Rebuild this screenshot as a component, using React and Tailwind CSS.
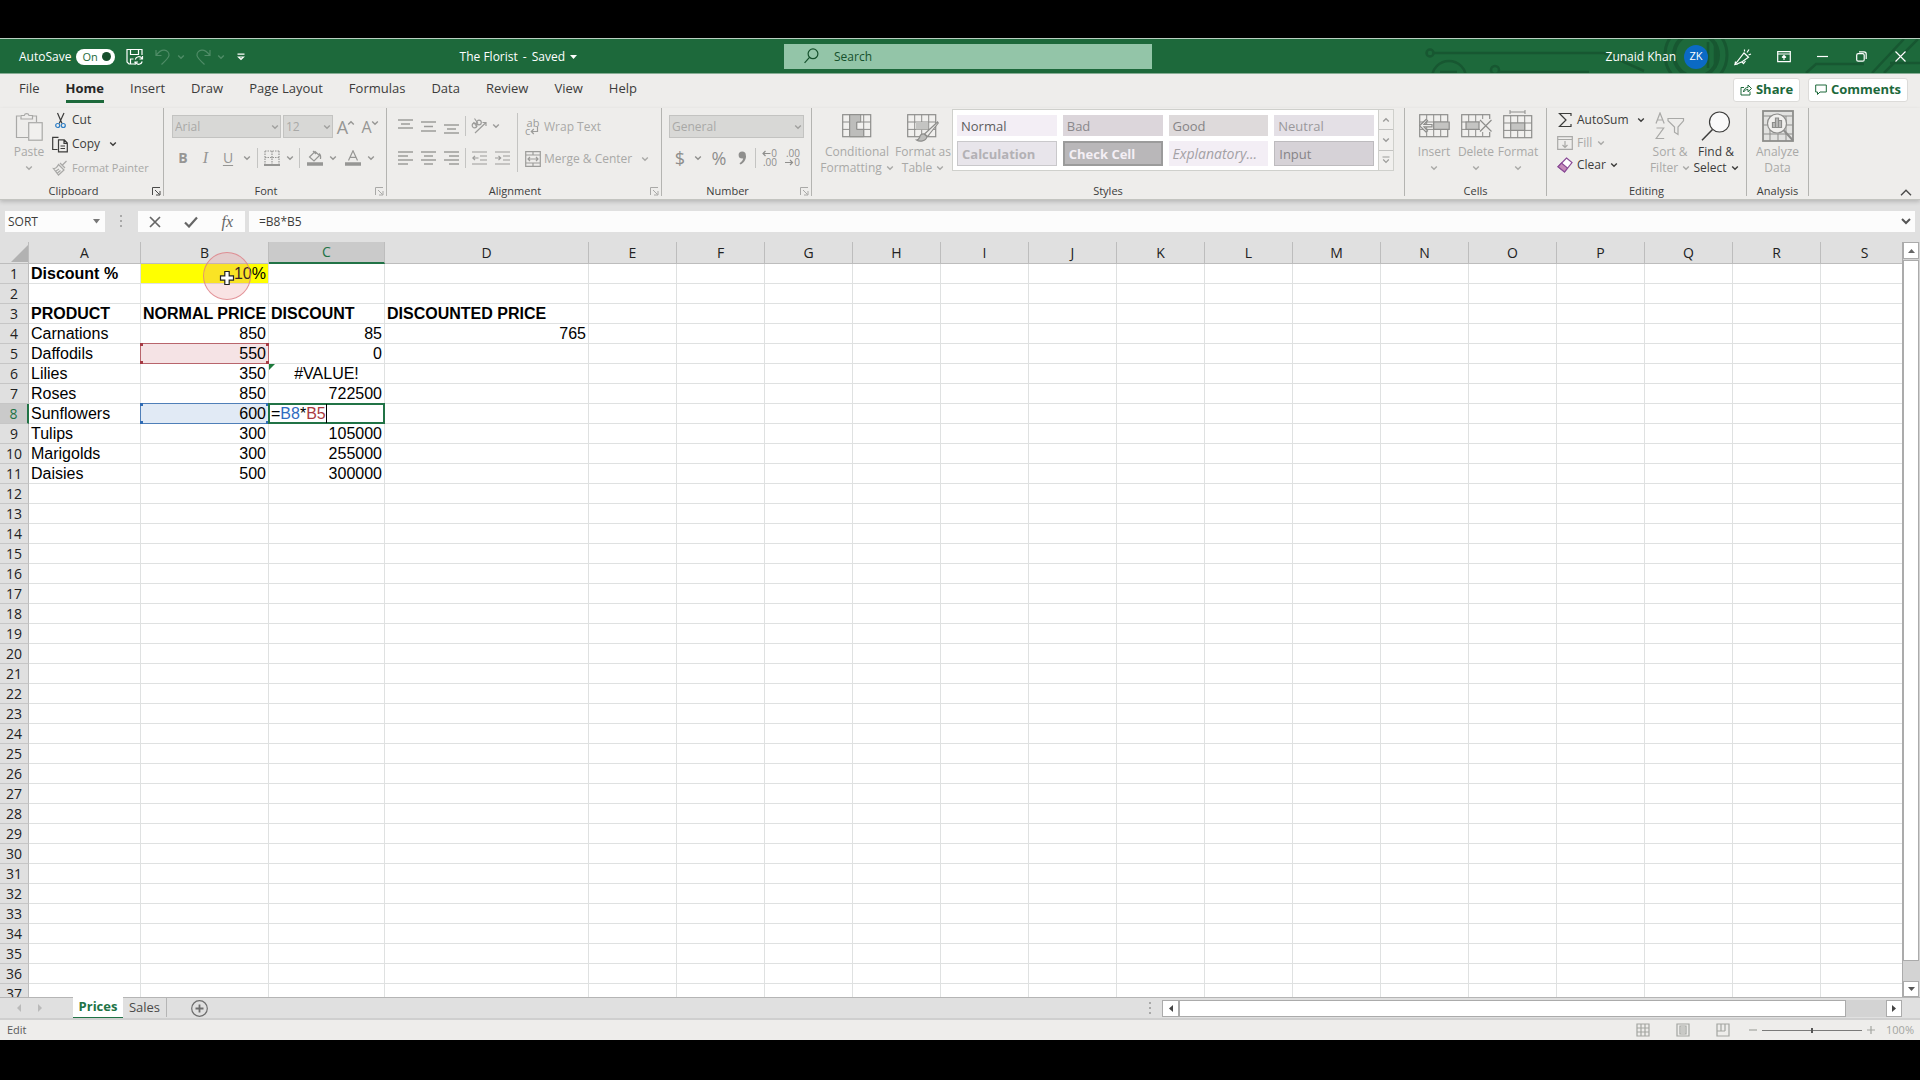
import React from "react";
import clsx from "clsx";

const ribbonTabs = ["File", "Home", "Insert", "Draw", "Page Layout", "Formulas", "Data", "Review", "View", "Help"];

const columns = [
  { id: "A", width: "w-[112px]" },
  { id: "B", width: "w-[128px]" },
  { id: "C", width: "w-[116px]" },
  { id: "D", width: "w-[204px]" },
  ..."EFGHIJKLMNOPQRS".split("").map((id) => ({ id, width: "w-[88px]" })),
];

const cells = {
  A1: { value: "Discount %", bold: true },
  B1: { value: "10%", align: "right", fill: "bg-[#ffff00]" },
  A3: { value: "PRODUCT", bold: true },
  B3: { value: "NORMAL PRICE", bold: true },
  C3: { value: "DISCOUNT", bold: true },
  D3: { value: "DISCOUNTED PRICE", bold: true },
  A4: { value: "Carnations" },
  B4: { value: "850", align: "right" },
  C4: { value: "85", align: "right" },
  D4: { value: "765", align: "right" },
  A5: { value: "Daffodils" },
  B5: { value: "550", align: "right", fill: "bg-[#f5e3e5]", range: "red" },
  C5: { value: "0", align: "right" },
  A6: { value: "Lilies" },
  B6: { value: "350", align: "right" },
  C6: { value: "#VALUE!", align: "center", error: true },
  A7: { value: "Roses" },
  B7: { value: "850", align: "right" },
  C7: { value: "722500", align: "right" },
  A8: { value: "Sunflowers" },
  B8: { value: "600", align: "right", fill: "bg-[#e1eaf5]", range: "blue" },
  C8: { editing: true },
  A9: { value: "Tulips" },
  B9: { value: "300", align: "right" },
  C9: { value: "105000", align: "right" },
  A10: { value: "Marigolds" },
  B10: { value: "300", align: "right" },
  C10: { value: "255000", align: "right" },
  A11: { value: "Daisies" },
  B11: { value: "500", align: "right" },
  C11: { value: "300000", align: "right" },
};

const cellStyles = [
  { name: "Normal", className: "bg-[#f3eef5] text-[13px] text-[#5e5d5f]" },
  { name: "Bad", className: "bg-[#dcd6db] text-[13px] text-[#8a888b]" },
  { name: "Good", className: "bg-[#dedadb] text-[13px] text-[#868486]" },
  { name: "Neutral", className: "bg-[#e4e0e6] text-[13px] text-[#9a989b]" },
  { name: "Calculation", className: "border border-[#c9c8cb] bg-[#e8e5eb] text-[13px] font-bold text-[#b3b1b5]" },
  { name: "Check Cell", className: "border-2 border-[#9b9b9b] bg-[#b9b7b9] text-[13px] font-bold text-[#f4eff5]" },
  { name: "Explanatory...", className: "bg-[#f3eef5] text-sm italic text-[#a3a1a5]" },
  { name: "Input", className: "border border-[#bdbbbe] bg-[#d6d2d7] text-[13px] text-[#868487]" },
];

function Icon({ w = 16, h = 16, className, children, ...props }) {
  return (
    <svg
      width={w}
      height={h}
      viewBox={`0 0 ${w} ${h}`}
      fill="none"
      stroke="currentColor"
      strokeWidth="1.2"
      aria-hidden="true"
      className={clsx("shrink-0", className)}
      {...props}
    >
      {children}
    </svg>
  );
}

function Chevron({ up, className }) {
  return (
    <Icon w={8} h={6} className={className} strokeWidth="1.4">
      <path d={up ? "M1.2 4.5 4 1.7 6.8 4.5" : "M1.2 1.5 4 4.3 6.8 1.5"} />
    </Icon>
  );
}

function Lines({ rows, w = 15, h = 16 }) {
  return (
    <Icon w={w} h={h} strokeWidth="1.5">
      {rows.map(([x1, x2, y]) => (
        <path key={y} d={`M${x1} ${y}H${x2}`} />
      ))}
    </Icon>
  );
}

function SheetGrid({ children }) {
  return (
    <>
      <rect x="0.7" y="0.7" width="28" height="22" fill="#f1f0ee" />
      <path d="M0.7 8h28M0.7 15.4h28M7.7 0.7v22M14.7 0.7v22M21.7 0.7v22" strokeWidth="1" />
      {children}
    </>
  );
}

function IconButton({ label, width, className, children }) {
  return (
    <button type="button" aria-label={label} className={clsx("flex h-5 shrink-0 items-center justify-center", width, className)}>
      {children}
    </button>
  );
}

function Divider({ className }) {
  return <span className={clsx("w-px shrink-0 bg-[#c4c4c2]", className)} />;
}

function TallButton({ icon, lines, width, chevron, className }) {
  return (
    <button type="button" className={clsx("flex shrink-0 flex-col items-center text-xs leading-4", width, className)}>
      <span className="flex h-9 items-center justify-center">{icon}</span>
      <span>{lines[0]}</span>
      <span className="flex h-4 items-center gap-1 whitespace-nowrap">
        {lines[1]}
        {chevron && <Chevron />}
      </span>
    </button>
  );
}

function Launcher({ className }) {
  return (
    <button type="button" aria-label="More options" className={className}>
      <Icon w={9} h={9} strokeWidth="1">
        <path d="M0.5 8V0.5H8M3 3l4.5 4.5M8 4v4H4" />
      </Icon>
    </button>
  );
}

function Group({ label, width, launcher, launcherColor = "text-[#a9a9a7]", className, children }) {
  return (
    <section aria-label={label} className={clsx("flex h-[88px] shrink-0 flex-col border-r border-[#b4b4b1]", width)}>
      <div className={clsx("flex h-[76px] shrink-0", className)}>{children}</div>
      <div className="flex h-[14px] shrink-0 items-center text-[11px] leading-[14px] text-[#3c3c3b]">
        <span className="flex-1 text-center">{label}</span>
        {launcher && (
          <span className="flex w-[18px] justify-end pr-[2px]">
            <Launcher className={launcherColor} />
          </span>
        )}
      </div>
    </section>
  );
}

function Dropdown({ label, value, width }) {
  return (
    <span className={clsx("relative flex h-[23px] shrink-0 items-center", width)}>
      <select
        aria-label={label}
        disabled
        className="h-full w-full appearance-none border border-[#c3c3c1] bg-[#d8d8d6] px-[2px] text-xs text-[#a9a9a7] opacity-100"
      >
        <option>{value}</option>
      </select>
      <Chevron className="pointer-events-none absolute right-[2px] text-[#a0a09e]" />
    </span>
  );
}

function TitleBar() {
  return (
    <header className="relative flex h-9 shrink-0 items-center overflow-hidden border-t border-b border-t-[#b9cfc1] border-b-[#86ad94] bg-[#1d693b] pl-4 text-xs text-white">
      {/* circuit board artwork */}
      <Icon w={496} h={34} className="absolute top-0 right-0 text-[#175731]" strokeWidth="2.5">
        <circle cx="6" cy="14" r="3.5" />
        <path d="M10 14h170l40 18" />
        <circle cx="25" cy="39" r="17" />
        <path d="M16 33h17" />
        <circle cx="71" cy="31" r="4" />
        <path d="M75 33h90" />
        <circle cx="272" cy="16" r="31" strokeWidth="3" />
        <circle cx="272" cy="16" r="22" strokeWidth="4" />
        <path d="M284 3v26M291 3v26M382 34l10-9h48M448 34l32-34M460 34l34-34M466 24h30" />
      </Icon>
      <div className="flex flex-1 items-center pt-px">
        <label className="ml-[3px] flex items-center gap-[5px]">
          AutoSave
          <input type="checkbox" role="switch" defaultChecked className="sr-only" />
          <span className="flex h-4 w-[39px] items-center justify-between rounded-full bg-white pr-1 pl-[6px] text-[11px] leading-4 text-[#1d693b]">
            On
            <span className="h-[9px] w-[9px] rounded-full bg-[#174f2d]" />
          </span>
        </label>
        <button type="button" aria-label="Save" className="ml-[11px]">
          <Icon w={18} h={18}>
            <path d="M8 16H3L1 14V1.5h15V7M4.5 1.5v5h8v-5M4.5 16v-5h3" />
            <path d="M9.3 11.5a3.6 3.6 0 0 1 6.6-1M16.5 8v3h-3M16.2 13.5a3.6 3.6 0 0 1-6.6 1M9 17v-3h3" />
          </Icon>
        </button>
        <button type="button" aria-label="Undo" className="ml-[11px] flex items-center gap-[6px] text-[#4f8c67]">
          <Icon w={16} h={18}>
            <path d="M1 2v5.5h5.5M1.3 7.2C4 3.5 6.5 2 9.2 2.2c3 .3 5 2.6 4.8 5.3-.2 2-1.5 3.5-7.5 9" />
          </Icon>
          <Chevron />
        </button>
        <button type="button" aria-label="Redo" className="ml-[10px] flex items-center gap-[6px] text-[#4f8c67]">
          <Icon w={16} h={18}>
            <path d="M15 2v5.5H9.5M14.7 7.2C12 3.5 9.5 2 6.8 2.2c-3 .3-5 2.6-4.8 5.3.2 2 1.5 3.5 7.5 9" />
          </Icon>
          <Chevron />
        </button>
        <button type="button" aria-label="Customize toolbar" className="ml-3">
          <Icon w={8} h={8}>
            <path d="M0.5 1.2h7M1.5 4 4 6.5 6.5 4z" />
          </Icon>
        </button>
        <button type="button" className="mr-[207px] ml-auto flex items-center gap-[5px]">
          <span>The Florist</span>
          <span>-</span>
          <span>Saved</span>
          <svg width="7" height="4" viewBox="0 0 7 4" fill="currentColor" aria-hidden="true">
            <path d="M0 0h7L3.5 4z" />
          </svg>
        </button>
      </div>
      <label className="relative flex h-[25px] w-[368px] shrink-0 items-center gap-[15px] bg-[#93c5a8] pl-5 text-[#16512d]">
        <Icon w={15} h={16}>
          <circle cx="9" cy="5.8" r="4.9" />
          <path d="M5.5 9.3.6 14.8" />
        </Icon>
        <input
          type="search"
          aria-label="Search"
          placeholder="Search"
          className="flex-1 bg-transparent pt-px text-xs outline-none placeholder:text-[#16512d]"
        />
      </label>
      <div className="relative flex flex-1 items-center justify-end pt-px">
        <span>Zunaid Khan</span>
        <span className="ml-2 flex h-6 w-6 items-center justify-center rounded-full bg-[#0b6ac4] text-[11px]">ZK</span>
        <button type="button" aria-label="Coming soon" className="ml-[26px]">
          <Icon w={18} h={18}>
            <path d="M1 16.5 10 5l4.5 4.2-6 4.3L3 16zM1.5 13.5 1 16.5l3-.5M8 14l1.5 1.5 2-2.5M10.5 3.5v-2M13 4.5l2-3M14.5 7l2.5-1" />
          </Icon>
        </button>
        <button type="button" aria-label="Ribbon display options" className="ml-[25px]">
          <Icon w={14} h={12}>
            <path d="M.7.7h12.6v10H.7zM.7 3h12.6M7 9V4.8M5 6.5l2-2 2 2" />
          </Icon>
        </button>
        <button type="button" aria-label="Minimize" className="ml-[26px]">
          <Icon w={11} h={11}>
            <path d="M0 5.5h11" />
          </Icon>
        </button>
        <button type="button" aria-label="Restore" className="ml-7">
          <Icon w={11} h={11}>
            <rect x="0.7" y="2.7" width="7.5" height="7.5" rx="1.5" />
            <path d="M3 .8h5a2.2 2.2 0 0 1 2.2 2.2v5" />
          </Icon>
        </button>
        <button type="button" aria-label="Close" className="mr-[14px] ml-7">
          <Icon w={11} h={11}>
            <path d="m.5.5 10 10m0-10-10 10" />
          </Icon>
        </button>
      </div>
    </header>
  );
}

function RibbonTabs() {
  return (
    <nav className="flex h-[34px] shrink-0 items-center pr-3 pl-[6px] text-[13px] text-[#3c3c3b]">
      {ribbonTabs.map((tab) => (
        <button
          key={tab}
          type="button"
          className={clsx(
            "mx-[13px] -mt-px h-6 border-b-[3px] whitespace-nowrap",
            tab === "Home" ? "border-[#1d693b] font-bold text-[#262626]" : "border-transparent"
          )}
        >
          {tab}
        </button>
      ))}
      <div className="mb-[3px] ml-auto flex gap-2 font-bold text-[#1d693b]">
        <button type="button" className="flex h-6 w-[67px] items-center justify-center gap-1 rounded-[3px] border border-[#dcdbd9] bg-white">
          <Icon w={12} h={13} strokeWidth="1">
            <path d="M4 4.5H1V12h9V8.5M3.5 9c.3-3 2-4.500 4.500-4.500V2l3.500 3.500L8 8.800V6.500C6 6.500 4.800 7.200 3.500 9z" />
          </Icon>
          Share
        </button>
        <button type="button" className="flex h-6 w-[100px] items-center justify-center gap-1 rounded-[3px] border border-[#dcdbd9] bg-white">
          <Icon w={12} h={12} strokeWidth="1">
            <path d="M.7 1h10.6v7H5l-2.5 2.500V8H.7z" />
          </Icon>
          Comments
        </button>
      </div>
    </nav>
  );
}

function ClipboardGroup() {
  return (
    <Group label="Clipboard" width="w-[162px]" launcher launcherColor="text-[#4a4a49]" className="pl-[7px]">
      <TallButton
        width="w-10"
        lines={["Paste", ""]}
        chevron
        className="text-[#a9a9a7]"
        icon={
          <Icon w={28} h={30}>
            <path d="M13 26.5H1.5V5H5M18 5h3.5v6M6 8V4.5h3.3a2.4 2.4 0 0 1 4.7 0h3.500V8z" />
            <rect x="13.7" y="11.7" width="13.5" height="17.5" fill="#f1f0ee" />
          </Icon>
        }
      />
      <div className="flex flex-col pl-[3px] text-xs text-[#3c3c3b]">
        <button type="button" className="flex h-6 items-center gap-1">
          <Icon w={16} h={17}>
            <path d="M5.5 1 10 11.5M12 1 7.2 11.5" />
            <circle cx="5.7" cy="13.5" r="2" stroke="#2f7fc6" />
            <circle cx="11.3" cy="13.5" r="2" stroke="#2f7fc6" />
          </Icon>
          Cut
        </button>
        <button type="button" className="flex h-6 items-center gap-1">
          <Icon w={16} h={17}>
            <path d="M5.5 13.5H.7V1.3h5.8M6.5 3.8v12h8.8V7l-3-3.2zM12 4v3.3h3.2M8.5 10H13M8.5 12.5H13" />
          </Icon>
          Copy
          <Chevron className="ml-[5px]" />
        </button>
        <button type="button" className="flex h-6 items-center gap-1 text-[11px] whitespace-nowrap text-[#a9a9a7]">
          <Icon w={16} h={16}>
            <path d="m14.5 1-4 4M8 3l5 5M6.5 4.5 12 10l-5.500 5L1.500 8.500c2 .3 3.500-1 5-4zM4 11l3-2M5.500 13l3-2.500" />
          </Icon>
          Format Painter
        </button>
      </div>
    </Group>
  );
}

function FontGroup() {
  return (
    <Group label="Font" width="w-[223px]" launcher className="flex-col pt-[7px] pl-2 text-[#969694]">
      <div className="flex h-[23px] items-center">
        <Dropdown label="Font" value="Arial" width="w-[109px]" />
        <Dropdown label="Font size" value="12" width="ml-[2px] w-[50px]" />
        <IconButton label="Increase font size" width="ml-[2px] w-[22px]" className="text-lg leading-5">
          A<Chevron up className="mb-2 -ml-px" />
        </IconButton>
        <IconButton label="Decrease font size" width="ml-[2px] w-[22px]" className="text-base leading-5">
          A<Chevron className="mb-2 -ml-px" />
        </IconButton>
      </div>
      <div className="mt-[10px] flex h-5 items-center text-sm">
        <IconButton label="Bold" width="w-[22px]" className="font-bold">B</IconButton>
        <IconButton label="Italic" width="w-[23px]" className="font-['Liberation_Serif',serif] text-base italic">I</IconButton>
        <IconButton label="Underline" width="w-[22px]" className="underline underline-offset-2">U</IconButton>
        <IconButton label="Underline options" width="w-4"><Chevron /></IconButton>
        <Divider className="mx-[2px] h-5" />
        <IconButton label="Borders" width="w-6">
          <Icon w={16} h={16}>
            <path d="M1 1h14M1 1v13M15 1v13M8 1v13M1 7.5h14" strokeDasharray="1.5 1" />
            <path d="M0 15h16" strokeWidth="2" />
          </Icon>
        </IconButton>
        <IconButton label="Border options" width="w-3"><Chevron /></IconButton>
        <Divider className="mx-[3px] h-5" />
        <IconButton label="Fill color" width="w-6">
          <Icon w={16} h={16}>
            <path d="m8 1.5 4.5 4L7 11 2.5 7zM6 1l3 3M12 3.500c1.500 1 2 2.500 1.500 5.500" />
            <path d="M0 14h16" strokeWidth="3.5" />
          </Icon>
        </IconButton>
        <IconButton label="Fill color options" width="w-3"><Chevron /></IconButton>
        <IconButton label="Font color" width="ml-[2px] w-6">
          <Icon w={16} h={16}>
            <path d="M3.5 10.5 8 .8l4.5 9.7M5 7.3h6" />
            <path d="M0 14h16" strokeWidth="3.5" />
          </Icon>
        </IconButton>
        <IconButton label="Font color options" width="w-3"><Chevron /></IconButton>
      </div>
    </Group>
  );
}

function AlignmentGroup() {
  return (
    <Group label="Alignment" width="w-[275px]" launcher className="pl-[7px] text-[#9c9c9a]">
      <div className="flex flex-col pt-2">
        <div className="flex h-5 items-center">
          <IconButton label="Top align" width="w-[23px]"><Lines rows={[[0, 15, 2], [3, 12, 6], [0, 15, 10]]} /></IconButton>
          <IconButton label="Middle align" width="w-[23px]"><Lines rows={[[0, 15, 4], [3, 12, 8.5], [0, 15, 13]]} /></IconButton>
          <IconButton label="Bottom align" width="w-[23px]"><Lines rows={[[0, 15, 7], [3, 12, 11], [0, 15, 15]]} /></IconButton>
          <Divider className="mx-[2px] h-5" />
          <IconButton label="Orientation" width="w-[22px]">
            <Icon w={18} h={18}>
              <circle cx="4.5" cy="8.5" r="2.3" />
              <path d="M3.5 5 7 10" />
              <circle cx="9" cy="5.5" r="2.3" />
              <path d="M4.5 1.5 8 6.5M5 16 16 5.5M12.5 5.5H16V9" />
            </Icon>
          </IconButton>
          <IconButton label="Orientation options" width="w-3"><Chevron /></IconButton>
        </div>
        <div className="mt-3 flex h-5 items-center">
          <IconButton label="Align left" width="w-[23px]"><Lines rows={[[0, 15, 2], [0, 10, 6], [0, 15, 10], [0, 10, 14]]} /></IconButton>
          <IconButton label="Center" width="w-[23px]"><Lines rows={[[0, 15, 2], [3, 12, 6], [0, 15, 10], [3, 12, 14]]} /></IconButton>
          <IconButton label="Align right" width="w-[23px]"><Lines rows={[[0, 15, 2], [5, 15, 6], [0, 15, 10], [5, 15, 14]]} /></IconButton>
          <Divider className="mx-[2px] h-5" />
          <IconButton label="Decrease indent" width="w-[23px]">
            <Icon w={15} h={16}>
              <path d="M0 2h15M8 6h7M8 10h7M0 14h15M6.5 8H.8M3 5.8.8 8 3 10.2" />
            </Icon>
          </IconButton>
          <IconButton label="Increase indent" width="w-[23px]">
            <Icon w={15} h={16}>
              <path d="M0 2h15M8 6h7M8 10h7M0 14h15M0 8h5.7M3.5 5.8 5.7 8l-2.2 2.2" />
            </Icon>
          </IconButton>
        </div>
      </div>
      <Divider className="mt-[5px] ml-[3px] h-[59px]" />
      <div className="flex flex-col pt-[9px] pl-[7px] text-xs text-[#a9a9a7]">
        <button type="button" className="flex h-5 items-center gap-[3px] whitespace-nowrap">
          <span className="flex w-4 flex-col text-[11px] leading-2 text-[#9c9c9a]">
            <span>ab</span>
            <span className="flex items-end">
              c
              <Icon w={9} h={8}>
                <path d="M7.500 0v4.500H1.500M3.800 2 1.300 4.500 3.800 7" />
              </Icon>
            </span>
          </span>
          Wrap Text
        </button>
        <button type="button" className="mt-3 flex h-5 items-center gap-[3px] whitespace-nowrap">
          <Icon w={16} h={16} className="text-[#9c9c9a]">
            <path d="M.7.7h14.6v14.6H.7zM.7 4h14.6M.7 12h14.6M8 .7V4M8 12v3.3M3 8h10M5 6 3 8l2 2M11 6l2 2-2 2" />
          </Icon>
          Merge &amp; Center
          <Chevron className="ml-[6px]" />
        </button>
      </div>
    </Group>
  );
}

function NumberGroup() {
  return (
    <Group label="Number" width="w-[150px]" launcher className="flex-col pt-[7px] pl-[7px] text-[#8f8f8d]">
      <Dropdown label="Number format" value="General" width="w-[135px]" />
      <div className="mt-[10px] flex h-5 items-center">
        <IconButton label="Accounting format" width="w-[22px]" className="text-lg">$</IconButton>
        <IconButton label="Accounting options" width="w-[14px]"><Chevron /></IconButton>
        <IconButton label="Percent style" width="ml-[2px] w-6" className="text-lg">%</IconButton>
        <IconButton label="Comma style" width="w-[22px]">
          <svg width="9" height="14" viewBox="0 0 9 14" fill="currentColor" aria-hidden="true">
            <circle cx="4.2" cy="4" r="3.6" />
            <path d="M8 4c.3 4-1.500 7.500-5.500 9.500L1.500 12.200c2.500-1.500 3.500-3 3.700-5.200z" />
          </svg>
        </IconButton>
        <Divider className="mx-[2px] h-5" />
        <IconButton label="Increase decimal" width="w-[23px]" className="flex-col text-[10px] leading-[9px]">
          <span className="flex items-center">
            <Icon w={9} h={7}>
              <path d="M8.5 3.5H1M3.5 1 1 3.500 3.500 6" />
            </Icon>
            0
          </span>
          <span className="self-end pr-1">.00</span>
        </IconButton>
        <IconButton label="Decrease decimal" width="w-[23px]" className="flex-col text-[10px] leading-[9px]">
          <span className="self-end pr-1">.00</span>
          <span className="flex items-center">
            <Icon w={9} h={7}>
              <path d="M0 3.5h7.5M5 1l2.500 2.500L5 6" />
            </Icon>
            0
          </span>
        </IconButton>
      </div>
    </Group>
  );
}

function StylesGroup() {
  return (
    <Group label="Styles" width="w-[593px]" className="pl-[10px]">
      <TallButton
        width="w-[70px]"
        lines={["Conditional", "Formatting"]}
        chevron
        className="text-[#a9a9a7]"
        icon={
          <Icon w={30} h={24} className="text-[#8d8d8b]">
            <SheetGrid>
              <path d="M7.7.7h11V8h-4v7.400h7v7.300h-14z" fill="#bdbdbb" strokeWidth="1" />
            </SheetGrid>
          </Icon>
        }
      />
      <TallButton
        width="ml-[2px] w-[58px]"
        lines={["Format as", "Table"]}
        chevron
        className="whitespace-nowrap text-[#a9a9a7]"
        icon={
          <Icon w={32} h={28} className="mt-1 text-[#8d8d8b]">
            <SheetGrid>
              <path d="M9 8h12v7.400H9z" fill="#c4c4c2" stroke="none" />
              <path d="m30.500 8-13 12 3 2.500L31.300 9z" fill="#eeedeb" />
              <path d="M17 20c-3-.3-4 1.500-4.500 3.500-.5 1.500-1.500 2.300-3 2.500 3 2 9.500 1.500 10.500-3.500z" fill="#bdbdbb" />
            </SheetGrid>
          </Icon>
        }
      />
      <div className="mt-px flex h-[62px] w-[442px] border border-[#cfd0cc] bg-white">
        <div className="grid flex-1 grid-cols-4 gap-x-[6px] gap-y-[5px] px-1 pt-[5px] pb-1">
          {cellStyles.map((style) => (
            <button key={style.name} type="button" className={clsx("overflow-hidden pl-1 text-left leading-5 whitespace-nowrap", style.className)}>
              {style.name}
            </button>
          ))}
        </div>
        <div className="flex w-[15px] flex-col border-l border-[#cfd0cc] bg-[#f1f0ee] text-[#9c9c9a]">
          <button type="button" aria-label="Previous styles" className="flex flex-1 items-center justify-center border-b border-[#c3c3c1]">
            <Chevron up />
          </button>
          <button type="button" aria-label="Next styles" className="flex flex-1 items-center justify-center border-b border-[#c3c3c1]">
            <Chevron />
          </button>
          <button type="button" aria-label="All styles" className="flex flex-1 items-center justify-center">
            <Icon w={8} h={8}>
              <path d="M.5 1h7M1.200 3.500 4 6.300 6.800 3.500" />
            </Icon>
          </button>
        </div>
      </div>
    </Group>
  );
}

function CellsGroup() {
  return (
    <Group label="Cells" width="w-[142px]" className="pl-2 text-[#a9a9a7]">
      <TallButton
        width="w-[42px]"
        lines={["Insert", ""]}
        chevron
        icon={
          <Icon w={31} h={24} className="text-[#8d8d8b]">
            <SheetGrid>
              <path d="M14.700 8h15.500v7.400H14.700z" fill="#c4c4c2" />
              <path d="M13 10.500H5l3.500-4-1.500-1L.5 11.700l6.500 6.200 1.500-1-3.500-4h8z" fill="#eeedeb" />
            </SheetGrid>
          </Icon>
        }
      />
      <TallButton
        width="w-[42px]"
        lines={["Delete", ""]}
        chevron
        icon={
          <Icon w={31} h={24} className="text-[#8d8d8b]">
            <SheetGrid>
              <path d="M5 8h13v7.400H5z" fill="#c4c4c2" />
              <path d="M19 5h12v13H19z" fill="#eeedeb" stroke="none" />
              <path d="m19 6 11.500 11.500M30.500 6 19 17.500" />
            </SheetGrid>
          </Icon>
        }
      />
      <TallButton
        width="w-[42px]"
        lines={["Format", ""]}
        chevron
        icon={
          <Icon w={30} h={30} className="mb-1 text-[#8d8d8b]">
            <path d="M7 3h15M7 1v4M22 1v4" strokeWidth="1" />
            <g transform="translate(0 6)">
              <SheetGrid>
                <path d="M7.700 8h14v7.400h-14z" fill="#c4c4c2" />
              </SheetGrid>
            </g>
          </Icon>
        }
      />
    </Group>
  );
}

function EditingGroup() {
  return (
    <Group label="Editing" width="w-[200px]" className="pl-[10px] text-[#3c3c3b]">
      <div className="flex w-[88px] flex-col text-xs">
        <button type="button" className="flex h-6 items-center gap-1 whitespace-nowrap">
          <Icon w={16} h={16}>
            <path d="M14 4V1.500H2.500L9 8l-6.500 6.500H14V12" />
          </Icon>
          AutoSum
          <Chevron className="ml-auto" />
        </button>
        <button type="button" className="flex h-[22px] items-center gap-1 text-[#a9a9a7]">
          <Icon w={16} h={14}>
            <path d="M.7.7h14.6v12.6H.7zM.7 3.500h14.600M8 5v6.500M5.500 9 8 11.500 10.500 9" />
          </Icon>
          Fill
          <Chevron className="ml-px" />
        </button>
        <button type="button" className="flex h-[22px] items-center gap-1">
          <Icon w={16} h={16}>
            <path d="M9.500 1 15 5.500 7.500 15 1 9.800z" fill="#fff" stroke="#8a4b96" />
            <path d="M1 9.800 4.500 6 10.500 11l-3 4z" fill="#c58bb9" stroke="#8a4b96" />
          </Icon>
          Clear
          <Chevron />
        </button>
      </div>
      <TallButton
        width="ml-[2px] w-[46px]"
        lines={["Sort &", "Filter"]}
        chevron
        className="text-[#a9a9a7]"
        icon={
          <Icon w={30} h={28}>
            <path d="M1 11.500 5 1l4.200 10.500M2.500 8h5.200M1.500 16h7.200L1.200 26.500h8" />
            <path d="M13 6.500h15.500v2.300L23 15v7.500l-3.500-2.300V15L13 8.800z" />
          </Icon>
        }
      />
      <TallButton
        width="w-[46px]"
        lines={["Find &", "Select"]}
        chevron
        icon={
          <Icon w={30} h={30}>
            <circle cx="18.5" cy="11" r="10" fill="#fafafa" />
            <path d="M11.500 18.500 1 29.300" strokeWidth="1.5" />
          </Icon>
        }
      />
    </Group>
  );
}

function Ribbon() {
  return (
    <div className="relative flex shrink-0 border-b border-[#c3c4c0] pb-[3px] pl-[2px] shadow-[0_2px_4px_rgba(0,0,0,0.18)]">
      <ClipboardGroup />
      <FontGroup />
      <AlignmentGroup />
      <NumberGroup />
      <StylesGroup />
      <CellsGroup />
      <EditingGroup />
      <Group label="Analysis" width="w-[62px]" className="justify-center text-[#a9a9a7]">
        <TallButton
          width="w-[60px]"
          lines={["Analyze", "Data"]}
          icon={
            <Icon w={32} h={32} className="text-[#8d8d8b]">
              <rect x="1" y="1" width="30" height="30" strokeWidth="1.8" fill="#e2e2e0" />
              <path d="M1 6h30M1 15h30M1 24h30M8 6v25M16 24v7M24 6v25" strokeWidth="1" />
              <circle cx="15" cy="13.5" r="9.5" fill="#f1f0ee" />
              <path d="M10.500 17.500v-5h3v5zM13.500 17.500V8h3v9.500zM16.500 17.500v-7h3v7z" fill="#bdbdbb" />
              <path d="m22 20.500 9 10" strokeWidth="2" />
            </Icon>
          }
        />
      </Group>
      <button type="button" aria-label="Collapse ribbon" className="mr-2 ml-auto self-end text-[#4a4a49]">
        <Icon w={12} h={7} strokeWidth="1.4">
          <path d="m1 6.300 5-5 5 5" />
        </Icon>
      </button>
    </div>
  );
}

function FormulaBar() {
  return (
    <div className="flex shrink-0 items-center pt-[11px] pr-[5px] pb-[10px] pl-[5px] text-xs text-[#3c3c3b]">
      <div className="flex h-[21px] w-[100px] items-center bg-[#fcfcfc] pr-[5px] pl-[3px]">
        <input aria-label="Name box" defaultValue="SORT" className="w-0 flex-1 bg-transparent text-xs outline-none" />
        <button type="button" aria-label="Name list">
          <svg width="7" height="5" viewBox="0 0 7 5" fill="#777" aria-hidden="true">
            <path d="M0 0h7L3.500 4.500z" />
          </svg>
        </button>
      </div>
      <svg width="3" height="13" viewBox="0 0 3 13" fill="#a9a9a9" className="mx-[15px]" aria-hidden="true">
        <path d="M0 0h2v2H0zM0 5h2v2H0zM0 10h2v2H0z" />
      </svg>
      <div className="flex h-[21px] w-[107px] items-center justify-between bg-[#fcfcfc] pr-3 pl-[11px] text-[#666]">
        <button type="button" aria-label="Cancel">
          <Icon w={12} h={12} strokeWidth="1.7">
            <path d="m1 1 10 10M11 1 1 11" />
          </Icon>
        </button>
        <button type="button" aria-label="Enter">
          <Icon w={14} h={12} strokeWidth="2.2">
            <path d="m1 6.500 4 4L13 1.500" />
          </Icon>
        </button>
        <button type="button" aria-label="Insert function" className="font-['Liberation_Serif',serif] text-base leading-5 italic">
          fx
        </button>
      </div>
      <div className="ml-1 flex h-[21px] flex-1 items-center bg-[#fcfcfc] pr-1 pl-[10px]">
        <input aria-label="Formula bar" defaultValue="=B8*B5" className="flex-1 bg-transparent text-xs outline-none" />
        <button type="button" aria-label="Expand formula bar" className="text-[#555]">
          <Icon w={10} h={7} strokeWidth="2">
            <path d="m1 1 4 4 4-4" />
          </Icon>
        </button>
      </div>
    </div>
  );
}

function RangeOutline({ color }) {
  const handle = color === "red" ? "bg-[#a63a44]" : "bg-[#2f6cb5]";
  return (
    <span className={clsx("absolute -inset-px z-10 border", color === "red" ? "border-[#b8656c]" : "border-[#4f7fb8]")}>
      <span className={clsx("absolute -top-px -left-px h-[3px] w-[3px]", handle)} />
      <span className={clsx("absolute -top-px -right-px h-[3px] w-[3px]", handle)} />
      <span className={clsx("absolute -bottom-px -left-px h-[3px] w-[3px]", handle)} />
      <span className={clsx("absolute -right-px -bottom-px h-[3px] w-[3px]", handle)} />
    </span>
  );
}

function PointerHighlight() {
  return (
    <span className="absolute -top-3 right-[17px] z-20 flex h-12 w-12 items-center justify-center rounded-full border border-[#dd7f86]/80 bg-[#e88f95]/25">
      <svg width="16" height="16" viewBox="0 0 16 16" fill="#fff" stroke="#222" strokeWidth="1.2" className="mt-1" aria-hidden="true">
        <path d="M5.800 1.500h4.400v4.300h4.300v4.400h-4.300v4.300H5.800v-4.300H1.500V5.800h4.300z" />
      </svg>
    </span>
  );
}

function Cell({ id }) {
  const cell = cells[id] || {};
  return (
    <td
      className={clsx(
        "relative h-5 border-r border-b border-[#dfe1e1] p-0 px-[2px] leading-[19px] whitespace-nowrap",
        cell.bold && "font-bold",
        cell.align === "right" && "text-right",
        cell.align === "center" && "text-center",
        cell.fill
      )}
    >
      {cell.value}
      {cell.range && <RangeOutline color={cell.range} />}
      {cell.error && (
        <svg width="6" height="6" viewBox="0 0 6 6" fill="#1d7a3c" className="absolute top-0 left-0" aria-hidden="true">
          <path d="M0 0h6L0 6z" />
        </svg>
      )}
      {cell.editing && (
        <span className="absolute -inset-px z-10 flex items-center border-2 border-[#217346] bg-white pl-px">
          <span>=</span>
          <span className="text-[#2f6cc0]">B8</span>
          <span>*</span>
          <span className="border-r border-black text-[#a83a3f]">B5</span>
        </span>
      )}
      {id === "B1" && <PointerHighlight />}
    </td>
  );
}

function Sheet() {
  return (
    <div className="flex min-h-0 flex-1">
      <div className="min-w-0 flex-1 overflow-hidden border-r border-[#ababab]">
        <table className="w-[1909px] min-w-full table-fixed border-separate border-spacing-0 bg-white font-['Liberation_Sans',Arial,sans-serif] text-base text-black">
          <thead>
            <tr className="font-['Open_Sans',sans-serif] text-sm text-[#222]">
              <th aria-label="Select all" className="h-[22px] w-[29px] border-r border-b border-[#bdbdbd] bg-[#e0e0e0] p-0">
                <svg width="17" height="18" viewBox="0 0 17 18" fill="#b2b2b2" className="mt-px ml-auto" aria-hidden="true">
                  <path d="M17 1v17H0z" />
                </svg>
              </th>
              {columns.map((col) => (
                <th
                  key={col.id}
                  scope="col"
                  className={clsx(
                    "h-[22px] border-r border-r-[#bdbdbd] p-0 text-center leading-5 font-normal",
                    col.width,
                    col.id === "C" ? "border-b-2 border-b-[#217346] bg-[#cacaca] text-[#217346]" : "border-b border-b-[#bdbdbd] bg-[#e0e0e0]"
                  )}
                >
                  {col.id}
                </th>
              ))}
            </tr>
          </thead>
          <tbody>
            {Array.from({ length: 37 }, (_, i) => i + 1).map((row) => (
              <tr key={row}>
                <th
                  scope="row"
                  className={clsx(
                    "h-5 border-b border-b-[#c6c6c6] p-0 text-center font-['Open_Sans',sans-serif] text-sm leading-[19px] font-normal",
                    row === 8 ? "border-r-2 border-r-[#217346] bg-[#cacaca] text-[#217346]" : "border-r border-r-[#bdbdbd] bg-[#e0e0e0] text-[#222]"
                  )}
                >
                  {row}
                </th>
                {columns.map((col) => (
                  <Cell key={col.id} id={col.id + row} />
                ))}
              </tr>
            ))}
          </tbody>
        </table>
      </div>
      <div className="flex w-[17px] shrink-0 flex-col bg-[#d3d3d3]">
        <button type="button" aria-label="Scroll up" className="flex h-[17px] w-4 shrink-0 items-center justify-center border border-[#ababab] bg-white">
          <svg width="7" height="4" viewBox="0 0 7 4" fill="#666" aria-hidden="true">
            <path d="M0 4h7L3.500 0z" />
          </svg>
        </button>
        <div className="mt-px w-4 flex-1 border border-[#ababab] bg-white" />
        <button type="button" aria-label="Scroll down" className="mt-5 flex h-4 w-4 shrink-0 items-center justify-center border border-[#ababab] bg-white">
          <svg width="7" height="4" viewBox="0 0 7 4" fill="#555" aria-hidden="true">
            <path d="M0 0h7L3.500 4z" />
          </svg>
        </button>
      </div>
    </div>
  );
}

function SheetTabs() {
  return (
    <div className="flex h-[23px] shrink-0 border-t border-b-2 border-t-[#b5b5b5] border-b-[#cfcfcf]">
      <div className="flex w-[73px] items-center gap-[17px] pl-[17px]">
        <button type="button" aria-label="Previous sheet">
          <svg width="4" height="8" viewBox="0 0 4 8" fill="#bababa" aria-hidden="true">
            <path d="M4 0v8L0 4z" />
          </svg>
        </button>
        <button type="button" aria-label="Next sheet">
          <svg width="4" height="8" viewBox="0 0 4 8" fill="#bababa" aria-hidden="true">
            <path d="M0 0v8l4-4z" />
          </svg>
        </button>
      </div>
      <button type="button" className="-mt-px flex h-[21px] w-[50px] items-center justify-center border-b border-[#217346] bg-white text-[13px] font-bold text-[#217346]">
        Prices
      </button>
      <button type="button" className="flex h-[19px] w-11 items-center justify-center border-r border-[#b5b5b5] text-[13px] text-[#4a4a49]">
        Sales
      </button>
      <button type="button" aria-label="New sheet" className="ml-6 text-[#6e6e6e]">
        <Icon w={17} h={17}>
          <circle cx="8.5" cy="8.5" r="7.8" />
          <path d="M8.500 4.500v8M4.500 8.500h8" strokeWidth="1.8" />
        </Icon>
      </button>
      <div className="ml-auto flex items-center pr-[18px]">
        <svg width="3" height="13" viewBox="0 0 3 13" fill="#a9a9a9" className="mr-[10px]" aria-hidden="true">
          <path d="M0 0h2v2H0zM0 5h2v2H0zM0 10h2v2H0z" />
        </svg>
        <div className="flex h-[17px] w-[740px] bg-[#d3d3d3]">
          <button type="button" aria-label="Scroll left" className="flex w-[17px] items-center justify-center border border-[#ababab] bg-white">
            <svg width="4" height="7" viewBox="0 0 4 7" fill="#444" aria-hidden="true">
              <path d="M4 0v7L0 3.500z" />
            </svg>
          </button>
          <div className="flex-1 border border-[#ababab] bg-white" />
          <button type="button" aria-label="Scroll right" className="ml-10 flex w-4 items-center justify-center border border-[#ababab] bg-white">
            <svg width="4" height="7" viewBox="0 0 4 7" fill="#444" aria-hidden="true">
              <path d="M0 0v7l4-3.500z" />
            </svg>
          </button>
        </div>
      </div>
    </div>
  );
}

function StatusBar() {
  return (
    <footer className="flex h-5 shrink-0 items-center bg-[#eeedeb] pr-[6px] pl-[7px] text-[11px] text-[#5a5a59]">
      <span>Edit</span>
      <div className="ml-auto flex items-center text-[#a3a5a1]">
        <button type="button" aria-label="Normal view" className="mr-[26px]">
          <Icon w={14} h={14}>
            <path d="M1 1h12v12H1zM1 5h12M1 9h12M5 1v12M9 1v12" />
          </Icon>
        </button>
        <button type="button" aria-label="Page layout view" className="mr-[26px]">
          <Icon w={14} h={14}>
            <path d="M1 1h12v12H1zM4 3h6v8H4zM5 5h4M5 7h4M5 9h4" />
          </Icon>
        </button>
        <button type="button" aria-label="Page break view" className="mr-[19px]">
          <Icon w={14} h={14}>
            <path d="M1 1h12v12H1zM5 1v7M9 1v7M1 8h8" />
          </Icon>
        </button>
        <button type="button" aria-label="Zoom out" className="mr-[5px]">
          <Icon w={8} h={8}>
            <path d="M0 4h8" />
          </Icon>
        </button>
        <input
          type="range"
          aria-label="Zoom"
          defaultValue="50"
          className="h-[5px] w-[100px] appearance-none bg-[linear-gradient(#7a7a79,#7a7a79)] bg-[length:100%_1px] bg-center bg-no-repeat [&::-webkit-slider-thumb]:h-[5px] [&::-webkit-slider-thumb]:w-[2px] [&::-webkit-slider-thumb]:appearance-none [&::-webkit-slider-thumb]:bg-[#555]"
        />
        <button type="button" aria-label="Zoom in" className="ml-[5px]">
          <Icon w={8} h={8}>
            <path d="M0 4h8M4 0v8" />
          </Icon>
        </button>
        <span className="ml-[11px]">100%</span>
      </div>
    </footer>
  );
}

export default function App() {
  return (
    <div className="h-screen bg-black pt-[38px] pb-10 font-['Open_Sans','Noto_Sans',sans-serif]">
      <div className="flex h-full flex-col overflow-hidden bg-[#e0e0e0]">
        <TitleBar />
        <div className="shrink-0 bg-[#eeedeb]">
          <RibbonTabs />
          <Ribbon />
        </div>
        <FormulaBar />
        <Sheet />
        <SheetTabs />
        <StatusBar />
      </div>
    </div>
  );
}
